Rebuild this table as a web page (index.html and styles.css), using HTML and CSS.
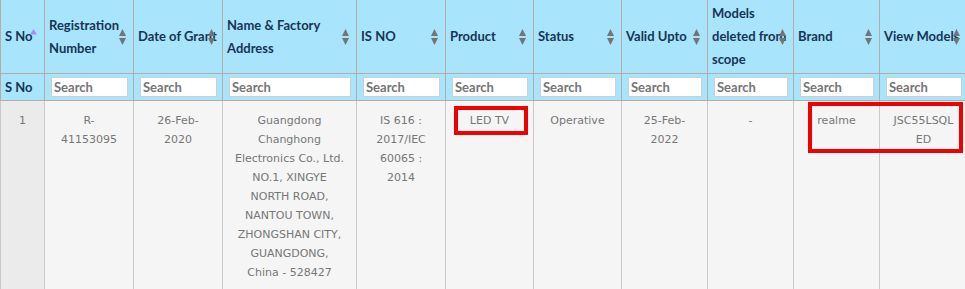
FILE: index.html
```html
<!DOCTYPE html>
<html>
<head>
<meta charset="utf-8">
<link rel="stylesheet" href="styles.css">
</head>
<body>
<div class="wrap">
<table class="grid">
  <colgroup>
    <col class="c44"><col class="c89"><col class="c89"><col class="c134"><col class="c89"><col class="c88"><col class="c88"><col class="c86"><col class="c86"><col class="c86"><col class="c88">
  </colgroup>
  <thead>
    <tr class="head">
      <th>S No<span class="sort asc"><svg width="7" height="16" viewBox="0 0 7 16"><polygon points="0,6.5 3.5,1 7,6.5"/></svg></span></th>
      <th>Registration Number<span class="sort"><svg width="7" height="16" viewBox="0 0 7 16"><polygon points="0,7 3.5,0 7,7"/><polygon points="0,9 7,9 3.5,16"/></svg></span></th>
      <th class="nowrap">Date of Grant<span class="sort"><svg width="7" height="16" viewBox="0 0 7 16"><polygon points="0,7 3.5,0 7,7"/><polygon points="0,9 7,9 3.5,16"/></svg></span></th>
      <th>Name &amp; Factory Address<span class="sort"><svg width="7" height="16" viewBox="0 0 7 16"><polygon points="0,7 3.5,0 7,7"/><polygon points="0,9 7,9 3.5,16"/></svg></span></th>
      <th>IS NO<span class="sort"><svg width="7" height="16" viewBox="0 0 7 16"><polygon points="0,7 3.5,0 7,7"/><polygon points="0,9 7,9 3.5,16"/></svg></span></th>
      <th>Product<span class="sort"><svg width="7" height="16" viewBox="0 0 7 16"><polygon points="0,7 3.5,0 7,7"/><polygon points="0,9 7,9 3.5,16"/></svg></span></th>
      <th>Status<span class="sort"><svg width="7" height="16" viewBox="0 0 7 16"><polygon points="0,7 3.5,0 7,7"/><polygon points="0,9 7,9 3.5,16"/></svg></span></th>
      <th>Valid Upto<span class="sort"><svg width="7" height="16" viewBox="0 0 7 16"><polygon points="0,7 3.5,0 7,7"/><polygon points="0,9 7,9 3.5,16"/></svg></span></th>
      <th>Models deleted from scope<span class="sort"><svg width="7" height="16" viewBox="0 0 7 16"><polygon points="0,7 3.5,0 7,7"/><polygon points="0,9 7,9 3.5,16"/></svg></span></th>
      <th>Brand<span class="sort"><svg width="7" height="16" viewBox="0 0 7 16"><polygon points="0,7 3.5,0 7,7"/><polygon points="0,9 7,9 3.5,16"/></svg></span></th>
      <th class="nowrap">View Models<span class="sort"><svg width="7" height="16" viewBox="0 0 7 16"><polygon points="0,7 3.5,0 7,7"/><polygon points="0,9 7,9 3.5,16"/></svg></span></th>
    </tr>
    <tr class="filters">
      <th>S No</th>
      <th><input type="text" placeholder="Search"></th>
      <th><input type="text" placeholder="Search"></th>
      <th><input type="text" placeholder="Search"></th>
      <th><input type="text" placeholder="Search"></th>
      <th><input type="text" placeholder="Search"></th>
      <th><input type="text" placeholder="Search"></th>
      <th><input type="text" placeholder="Search"></th>
      <th><input type="text" placeholder="Search"></th>
      <th><input type="text" placeholder="Search"></th>
      <th><input type="text" placeholder="Search"></th>
    </tr>
  </thead>
  <tbody>
    <tr>
      <td class="sorted">1</td>
      <td>R-<br>41153095</td>
      <td>26-Feb-<br>2020</td>
      <td>Guangdong<br>Changhong<br>Electronics Co., Ltd.<br>NO.1, XINGYE<br>NORTH ROAD,<br>NANTOU TOWN,<br>ZHONGSHAN CITY,<br>GUANGDONG,<br>China - 528427</td>
      <td>IS 616 :<br>2017/IEC<br>60065 :<br>2014</td>
      <td>LED TV</td>
      <td>Operative</td>
      <td>25-Feb-<br>2022</td>
      <td>-</td>
      <td>realme</td>
      <td>JSC55LSQL<br>ED</td>
    </tr>
  </tbody>
</table>
<div class="mark mark-product"></div>
<div class="mark mark-brand"></div>
</div>
</body>
</html>
```

FILE: styles.css
```css
html, body {
  margin: 0;
  padding: 0;
  background: #ffffff;
  overflow: hidden;
}

.wrap {
  position: relative;
  width: 967px;
  height: 289px;
  overflow: hidden;
}

.grid {
  table-layout: fixed;
  border-collapse: collapse;
  width: 967px;
}

.c44 { width: 44px; }
.c86 { width: 86px; }
.c88 { width: 88px; }
.c89 { width: 89px; }
.c134 { width: 134px; }

.grid th {
  background: #a8e4fb;
  color: #173456;
  font-family: Lato, "Open Sans", sans-serif;
  font-weight: bold;
  font-size: 13px;
  text-align: left;
  border: 1px solid #b4aca6;
}

.head th {
  position: relative;
  height: 73px;
  box-sizing: border-box;
  padding: 2px 4px 1px 4px;
  line-height: 23px;
  vertical-align: middle;
  border-top: none;
}

.head th.nowrap {
  white-space: nowrap;
}

.sort {
  position: absolute;
  right: 7px;
  top: 50%;
  margin-top: -7px;
  width: 7px;
  height: 16px;
  fill: #747474;
  line-height: 0;
}

.sort svg {
  display: block;
}

.sort.asc {
  fill: #a08ef3;
  margin-top: -8px;
}

.filters th {
  height: 27px;
  box-sizing: border-box;
  padding: 3px 5px 2px 6px;
  vertical-align: middle;
  line-height: 18px;
  border-top: none;
}

.filters th:first-child {
  padding-left: 4px;
}

.filters input {
  display: block;
  width: 100%;
  height: 20px;
  box-sizing: border-box;
  margin: 0;
  padding: 0 2px;
  border: 1px solid #cfcfcf;
  background: #ffffff;
  font-family: Lato, "Open Sans", sans-serif;
  font-weight: bold;
  font-size: 13px;
  color: #333;
  outline: none;
}

.filters input::placeholder {
  color: #757575;
  opacity: 1;
}

.grid td {
  background: #f5f5f5;
  color: #777777;
  font-family: "DejaVu Sans", Verdana, sans-serif;
  font-size: 11px;
  line-height: 19px;
  text-align: center;
  vertical-align: top;
  padding: 10px 6px 9px 6px;
  border-left: 1px solid #c9c9c9;
  border-right: 1px solid #c9c9c9;
  border-top: 1px solid #c4c4c4;
}

.grid td.sorted {
  background: #ebebeb;
}

.mark {
  position: absolute;
  border: 4px solid #f00000;
  box-sizing: border-box;
  pointer-events: none;
}

.mark-product {
  left: 454px;
  top: 106px;
  width: 74px;
  height: 29px;
}

.mark-brand {
  left: 808px;
  top: 102px;
  width: 155px;
  height: 51px;
}
```
